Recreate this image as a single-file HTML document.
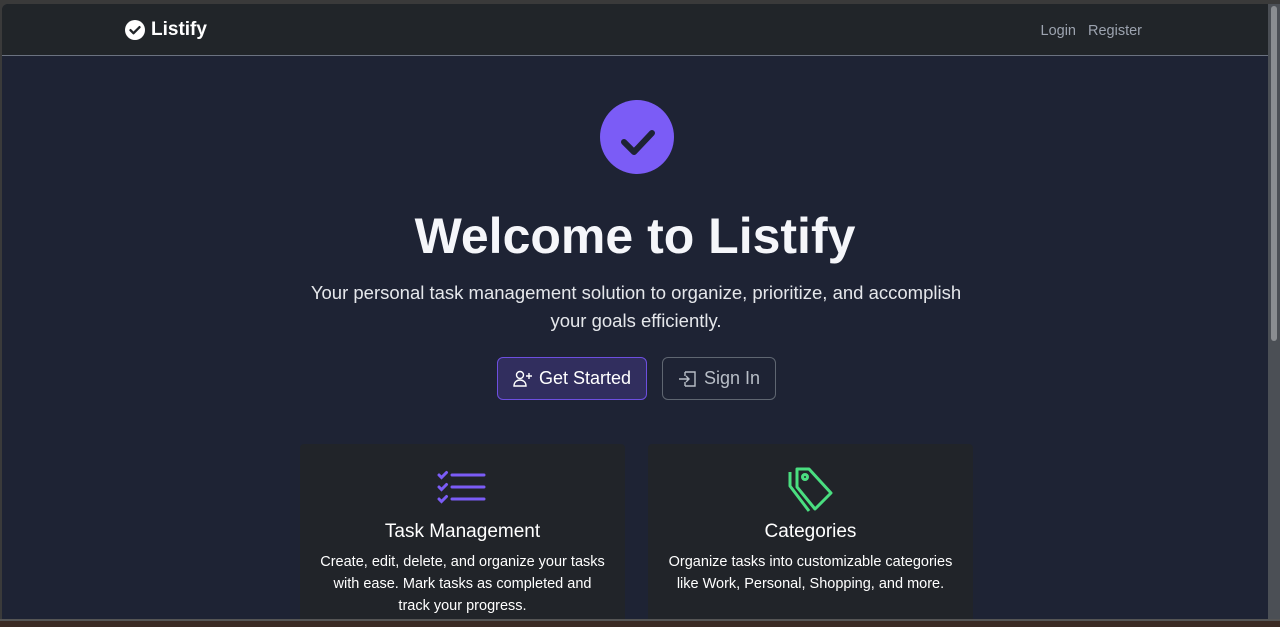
<!DOCTYPE html>
<html><head><meta charset="utf-8"><style>
*{margin:0;padding:0;box-sizing:border-box}
body{width:1280px;height:627px;overflow:hidden;background:#3a3a3a;font-family:"Liberation Sans",sans-serif;position:relative}
.win{position:absolute;left:2px;top:4px;width:1266px;height:615px;background:#1e2334;border-radius:6px 0 0 0;overflow:hidden}
.nav{height:52px;background:#212529;border-bottom:1px solid #6b7280;position:relative}
.brand{position:absolute;left:123px;top:15px;color:#fff;font-weight:bold;font-size:19px;display:flex;align-items:center;gap:6px}
.links{position:absolute;right:126px;top:19px;color:#9ca3af;font-size:14.5px}
.links span{margin-left:12px}
.sb{position:absolute;left:1268px;top:4px;width:12px;height:615px;background:#4b4f55}
.sb i{position:absolute;left:3px;top:2px;width:6px;height:335px;background:#8a8d91;border-radius:3px}
.bot{position:absolute;left:0;top:619px;width:1280px;height:8px;background:#3b2a24;border-top:2px solid #555}
.circle{position:absolute;left:598px;top:96px;width:74px;height:74px;border-radius:50%;background:#7b5cf6}
h1{position:absolute;left:0;width:1266px;top:203px;text-align:center;color:#f5f6fa;font-size:50px;font-weight:bold}
.sub{position:absolute;left:284px;width:700px;top:275px;text-align:center;color:#e5e7eb;font-size:18.5px;line-height:28px}
.btn{position:absolute;top:353px;height:43px;border-radius:6px;font-size:18px;display:flex;align-items:center;justify-content:center;gap:6px}
.b1{left:495px;width:150px;background:#312e5e;border:1px solid #6d4fe0;color:#fff}
.b2{left:660px;width:114px;border:1px solid #5f6671;color:#b8bec7}
.card{position:absolute;top:440px;width:325px;height:180px;background:#212429;border-radius:4px;text-align:center;color:#fff}
.card h3{position:absolute;top:77px;width:100%;font-size:19px;font-weight:normal}
.card p{position:absolute;top:107px;width:100%;font-size:14.5px;line-height:22px;padding:0 8px}
</style></head><body>
<div class="win">
 <div class="nav">
  <div class="brand"><svg width="20" height="20" viewBox="0 0 20 20"><circle cx="10" cy="10" r="10" fill="#fff"/><path d="M5.5 10.2l3 3 6-6" stroke="#212529" stroke-width="2.4" fill="none" stroke-linecap="round" stroke-linejoin="round"/></svg>Listify</div>
  <div class="links"><span>Login</span><span>Register</span></div>
 </div>
 <div class="circle"><svg width="74" height="74" viewBox="0 0 74 74"><path d="M24 42l10 10 18-19" stroke="#1e2334" stroke-width="6" fill="none" stroke-linecap="round" stroke-linejoin="round"/></svg></div>
 <h1>Welcome to Listify</h1>
 <div class="sub">Your personal task management solution to organize, prioritize, and accomplish<br>your goals efficiently.</div>
 <div class="btn b1"><svg width="20" height="18" viewBox="0 0 20 18" fill="none" stroke="#fff" stroke-width="1.4"><circle cx="7" cy="5" r="3.5"/><path d="M1 16c0-4 3-6 6-6s6 2 6 6z"/><path d="M16 3v6M13 6h6"/></svg>Get Started</div>
 <div class="btn b2"><svg width="20" height="18" viewBox="0 0 20 18" fill="none" stroke="#b8bec7" stroke-width="1.4"><path d="M7 2h10v14H7M7 12v4M7 2v4"/><path d="M1 9h10M8 6l3 3-3 3"/></svg>Sign In</div>
 <div class="card" style="left:298px">
  <svg style="position:absolute;left:137px;top:26px" width="50" height="36" viewBox="0 0 50 36"><g stroke="#7b5cf6" stroke-width="3" fill="none" stroke-linecap="round"><path d="M2 5l2.5 2.5 5-5M2 17l2.5 2.5 5-5M2 29l2.5 2.5 5-5"/><path d="M15 5h32M15 17h32M15 29h32"/></g></svg>
  <h3>Task Management</h3>
  <p>Create, edit, delete, and organize your tasks<br>with ease. Mark tasks as completed and<br>track your progress.</p>
 </div>
 <div class="card" style="left:646px">
  <svg style="position:absolute;left:136px;top:22px" width="54" height="50" viewBox="0 0 54 50"><g stroke="#4ade80" stroke-width="3" fill="none" stroke-linejoin="round"><path d="M13 3h12l22 24-16 16L13 21z"/><circle cx="21" cy="11" r="2.5"/><path d="M6 6v14l19 25"/></g></svg>
  <h3>Categories</h3>
  <p>Organize tasks into customizable categories<br>like Work, Personal, Shopping, and more.</p>
 </div>
</div>
<div class="sb"><i></i></div>
<div class="bot"></div>
</body></html>
